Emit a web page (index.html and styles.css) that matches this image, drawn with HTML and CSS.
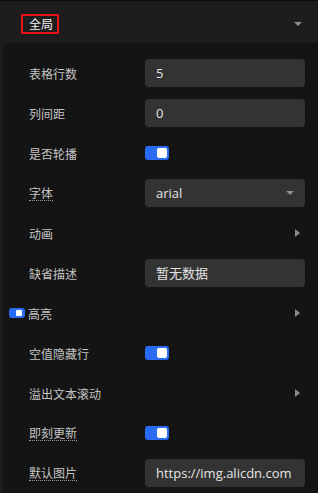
FILE: index.html
```html
<!DOCTYPE html>
<html lang="zh-CN">
<head>
    <meta charset="UTF-8">
    <meta name="viewport" content="width=device-width, initial-scale=1.0">
    <title>全局配置</title>
    <link rel="stylesheet" href="styles.css">
</head>
<body>
    <div class="header">
        <span class="title">全局</span>
        <span class="caret-down head-caret"></span>
    </div>
    <div class="panel">
        <div class="row">
            <span class="label">表格行数</span>
            <div class="field">5</div>
        </div>
        <div class="row">
            <span class="label">列间距</span>
            <div class="field">0</div>
        </div>
        <div class="row">
            <span class="label">是否轮播</span>
            <span class="switch"><span class="knob"></span></span>
        </div>
        <div class="row">
            <span class="label"><span class="tip">字体</span></span>
            <div class="field select">arial<span class="caret-down"></span></div>
        </div>
        <div class="row">
            <span class="label">动画</span>
            <span class="caret-right"></span>
        </div>
        <div class="row">
            <span class="label">缺省描述</span>
            <div class="field">暂无数据</div>
        </div>
        <div class="row group">
            <span class="label"><span class="switch small"><span class="knob"></span></span>高亮</span>
            <span class="caret-right"></span>
        </div>
        <div class="row">
            <span class="label">空值隐藏行</span>
            <span class="switch"><span class="knob"></span></span>
        </div>
        <div class="row">
            <span class="label">溢出文本滚动</span>
            <span class="caret-right"></span>
        </div>
        <div class="row">
            <span class="label"><span class="tip">即刻更新</span></span>
            <span class="switch"><span class="knob"></span></span>
        </div>
        <div class="row">
            <span class="label"><span class="tip">默认图片</span></span>
            <div class="field">https://img.alicdn.com</div>
        </div>
    </div>
</body>
</html>
```

FILE: styles.css
```css
body {
    margin: 0;
    padding: 0;
    background-color: #1d1d1d;
    font-family: "Noto Sans CJK SC", "Open Sans", sans-serif;
    font-size: 12px;
    color: #c4c4c4;
    overflow: hidden;
}

.header {
    height: 43px;
    box-sizing: border-box;
    border-top: 1px solid #0b0b0b;
    padding: 13px 16px 0 21px;
    display: flex;
    justify-content: space-between;
    align-items: flex-start;
}

.title {
    border: 2px solid #e3121b;
    padding: 0 4px 0 6px;
    line-height: 16px;
    color: #f2f2f2;
}

.head-caret {
    margin-top: 8px;
}

.caret-down {
    width: 0;
    height: 0;
    border-left: 4px solid transparent;
    border-right: 4px solid transparent;
    border-top: 4px solid #8c8c8c;
}

.caret-right {
    justify-self: end;
    margin-right: 5px;
    width: 0;
    height: 0;
    border-top: 4px solid transparent;
    border-bottom: 4px solid transparent;
    border-left: 5px solid #8c8c8c;
}

.panel {
    margin-left: 3px;
    background-color: #141414;
    border-top-left-radius: 4px;
    padding-top: 10px;
}

.row {
    height: 40px;
    display: grid;
    grid-template-columns: 116px 160px;
    align-items: center;
    padding-left: 26px;
}

.row.group {
    padding-left: 6px;
    grid-template-columns: 136px 160px;
}

.label {
    display: flex;
    align-items: center;
    gap: 3px;
}

.tip {
    border-bottom: 1px dotted #9a9a9a;
    line-height: 14px;
}

.field {
    height: 28px;
    line-height: 28px;
    background-color: #333333;
    border-radius: 4px;
    padding: 0 11px;
    font-family: "Open Sans", "Noto Sans CJK SC", sans-serif;
    font-size: 13px;
    color: #e4e4e4;
    white-space: nowrap;
    overflow: hidden;
}

.select {
    display: flex;
    justify-content: space-between;
    align-items: center;
}

.switch {
    width: 24px;
    height: 14px;
    box-sizing: border-box;
    padding: 2px;
    background-color: #2a6bf4;
    border-radius: 3px;
    display: flex;
    justify-content: flex-end;
}

.knob {
    width: 10px;
    height: 10px;
    background-color: #ffffff;
    border-radius: 2px;
}

.switch.small {
    width: 16px;
    height: 10px;
    padding: 2px 3px;
}

.switch.small .knob {
    width: 6px;
    height: 6px;
    border-radius: 1px;
}
```
